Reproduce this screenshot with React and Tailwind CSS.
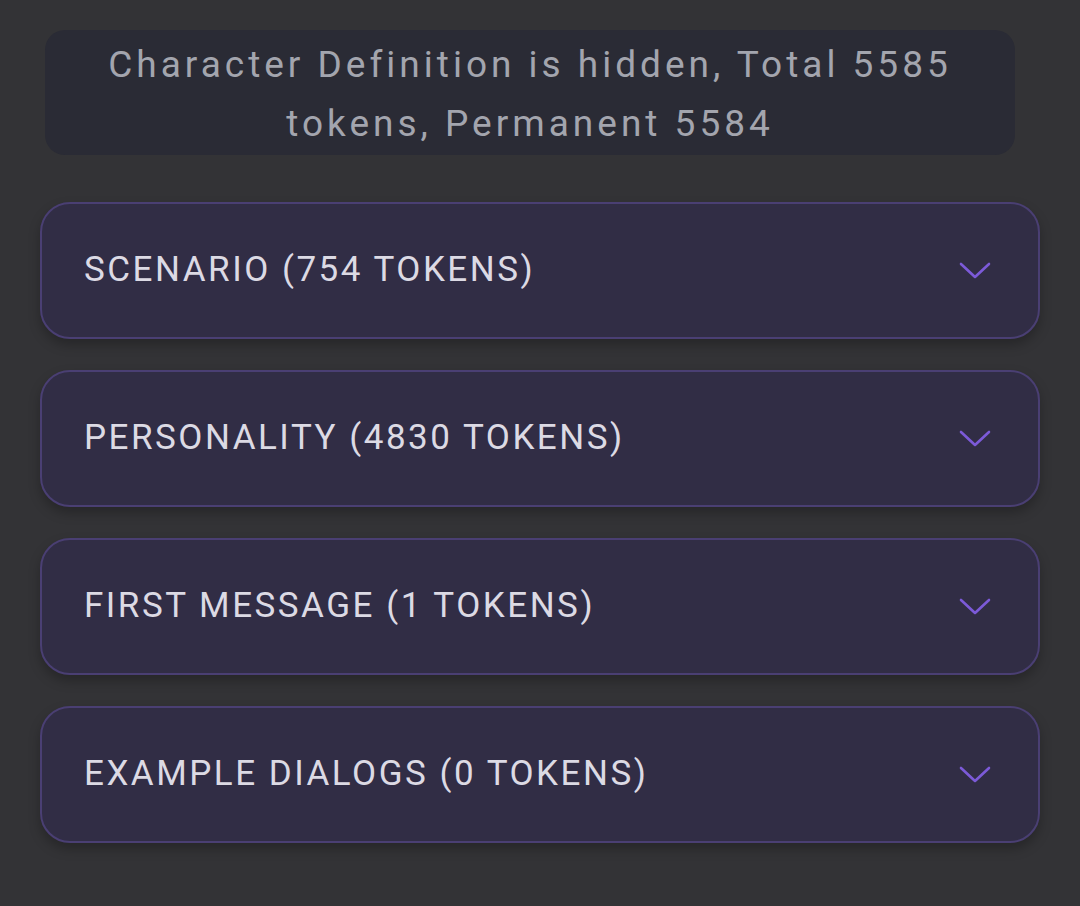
import React from 'react';

const sections = [
  'SCENARIO (754 TOKENS)',
  'PERSONALITY (4830 TOKENS)',
  'FIRST MESSAGE (1 TOKENS)',
  'EXAMPLE DIALOGS (0 TOKENS)',
];

const Chevron = () => (
  <svg width="34" height="20" viewBox="0 0 34 20" fill="none" className="text-[#7c5ad8]">
    <path d="M3 3l14 13L31 3" stroke="currentColor" strokeWidth="2.6" strokeLinecap="round" strokeLinejoin="round" />
  </svg>
);

const App = () => {
  return (
    <div
      className="min-h-[906px] w-[1080px] bg-[#333336] pt-[30px] pb-[60px]"
      style={{ fontFamily: 'Roboto, "Liberation Sans", sans-serif' }}
    >
      <div className="ml-[45px] w-[970px] rounded-[20px] bg-[#2a2b35] px-10 pt-[5px] pb-[2px] text-center text-[37px] leading-[59px] tracking-[4px] text-[#a3a5ae]">
        Character Definition is hidden, Total 5585 tokens, Permanent 5584
      </div>

      <div className="mx-10 mt-[47px] flex flex-col gap-[31px]">
        {sections.map((label) => (
          <div
            key={label}
            className="flex h-[137px] items-center justify-between rounded-[30px] border-2 border-[#4a3f73] bg-[#312d45] pl-[42px] pr-[46px] shadow-[0_6px_12px_rgba(0,0,0,0.25)]"
          >
            <span className="text-[35px] tracking-[2.5px] text-[#dcdae4]">{label}</span>
            <Chevron />
          </div>
        ))}
      </div>
    </div>
  );
};

export default App;
